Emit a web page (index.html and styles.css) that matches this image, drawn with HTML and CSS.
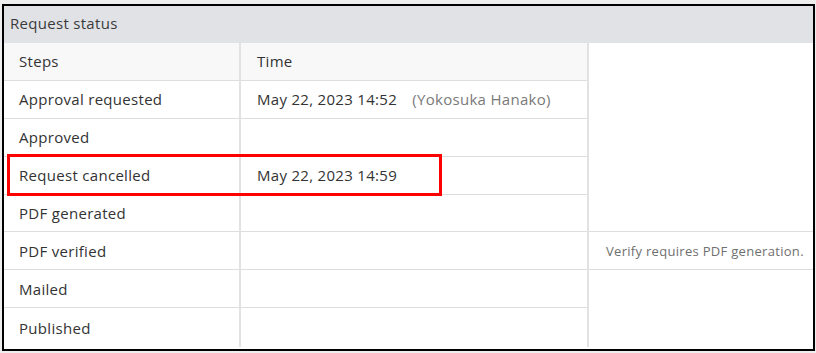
FILE: index.html
```html
<!DOCTYPE html>
<html>
  <head>
    <title>Request status</title>
    <link rel="stylesheet" href="styles.css">
  </head>
  <body>
    <div class="frame">
      <div class="panel-title">Request status</div>
      <table class="status-table">
        <tr class="head-row">
          <th class="col-step">Steps</th>
          <th class="col-time">Time</th>
          <td class="col-note blank" rowspan="4"></td>
        </tr>
        <tr>
          <td>Approval requested</td>
          <td>May 22, 2023 14:52 <span class="who">(Yokosuka Hanako)</span></td>
        </tr>
        <tr>
          <td>Approved</td>
          <td></td>
        </tr>
        <tr>
          <td>Request cancelled</td>
          <td>May 22, 2023 14:59</td>
        </tr>
        <tr>
          <td>PDF generated</td>
          <td></td>
          <td class="col-note"></td>
        </tr>
        <tr>
          <td>PDF verified</td>
          <td></td>
          <td class="col-note note">Verify requires PDF generation.</td>
        </tr>
        <tr>
          <td>Mailed</td>
          <td></td>
          <td class="col-note blank" rowspan="2"></td>
        </tr>
        <tr class="last-row">
          <td>Published</td>
          <td></td>
        </tr>
      </table>
      <div class="highlight"></div>
    </div>
  </body>
</html>
```

FILE: styles.css
```css
html, body {
  margin: 0;
  padding: 0;
}

body {
  background-color: #eeeeee;
  font-family: "Open Sans", Arial, sans-serif;
  font-size: 15px;
  letter-spacing: 0.3px;
  color: #333;
}

.frame {
  position: relative;
  margin: 4px 1px 0 2px;
  height: 343px;
  border: 2px solid #000;
  background-color: #fff;
  overflow: hidden;
}

.panel-title {
  height: 37px;
  line-height: 35px;
  padding-left: 6px;
  background-color: #e1e2e6;
  color: #3a3a3a;
}

.status-table {
  width: 100%;
  border-collapse: collapse;
  table-layout: fixed;
}

.status-table th,
.status-table td {
  height: 36.9px;
  padding: 0 0 0 15px;
  text-align: left;
  font-weight: normal;
  border-bottom: 1px solid #dedede;
  border-right: 2px solid #e2e2e2;
  white-space: nowrap;
}

.head-row th {
  background-color: #f8f8f8;
}

.col-step {
  width: 220px;
}

.col-time {
  width: 330px;
  padding-left: 16px !important;
}

.status-table td:nth-child(2) {
  padding-left: 16px;
}

.status-table .col-note {
  border-right: none;
}

.status-table .blank {
  border-bottom: none;
}

/* last row stretches down to the frame edge */
.last-row td {
  height: 39px;
  border-bottom: none;
}

.who {
  margin-left: 11px;
  color: #7a7a7a;
}

.note {
  font-size: 13px;
  color: #6f6f6f;
  padding-left: 17px !important;
}

.highlight {
  position: absolute;
  left: 3px;
  top: 148px;
  width: 429px;
  height: 36px;
  border: 3px solid #ff0000;
}
```
